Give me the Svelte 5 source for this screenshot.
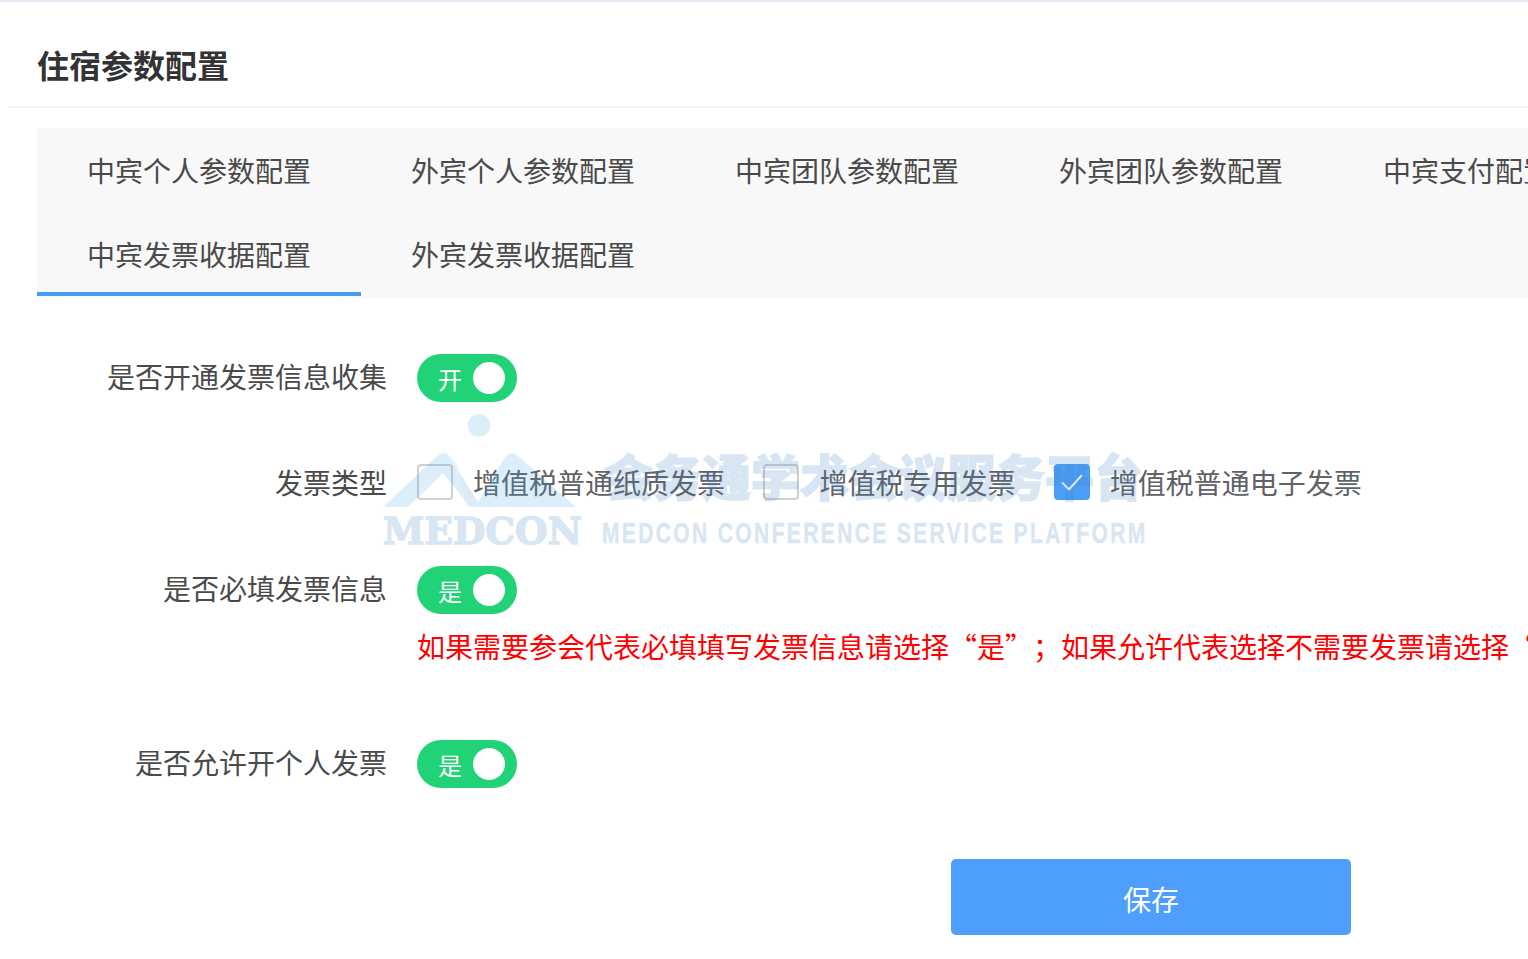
<script>
	const tabs = [
		'中宾个人参数配置',
		'外宾个人参数配置',
		'中宾团队参数配置',
		'外宾团队参数配置',
		'中宾支付配置',
		'中宾发票收据配置',
		'外宾发票收据配置'
	];
	const activeTab = 5;

	const invoiceTypes = [
		{ label: '增值税普通纸质发票', checked: false },
		{ label: '增值税专用发票', checked: false },
		{ label: '增值税普通电子发票', checked: true }
	];
</script>

<div class="page">
	<h1 class="title">住宿参数配置</h1>

	<div class="tabs">
		{#each tabs as tab, i}
			<div class="tab" class:active={i === activeTab}>{tab}</div>
		{/each}
	</div>

	<form class="form">
		<div class="row first">
			<div class="label">是否开通发票信息收集</div>
			<div class="switch"><span>开</span><i></i></div>
		</div>

		<div class="row types">
			<div class="label">发票类型</div>
			<div class="checks">
				{#each invoiceTypes as item}
					<div class="check">
						<span class="box" class:checked={item.checked}>
							{#if item.checked}
								<svg viewBox="0 0 36 36" width="36" height="36">
									<path d="M8 18.5 L15 25.5 L28 11" fill="none" stroke="#fff" stroke-width="2" />
								</svg>
							{/if}
						</span>
						<span class="check-label">{item.label}</span>
					</div>
				{/each}
			</div>
		</div>

		<div class="row required">
			<div class="label">是否必填发票信息</div>
			<div>
				<div class="switch"><span>是</span><i></i></div>
				<div class="tip">如果需要参会代表必填填写发票信息请选择“是”；如果允许代表选择不需要发票请选择“否”。</div>
			</div>
		</div>

		<div class="row personal">
			<div class="label">是否允许开个人发票</div>
			<div class="switch"><span>是</span><i></i></div>
		</div>

		<div class="actions">
			<button type="button" class="save">保存</button>
		</div>
	</form>

	<div class="watermark">
		<svg class="mark" viewBox="0 0 198 96" width="198" height="96">
			<circle cx="97" cy="13.3" r="11.3" fill="#3ca5e6" />
			<path fill-rule="evenodd" d="M1 95 L55 44 Q61 38 67 44 L96 90 L124 44 Q130 38 136 44 L194 95 Z M61 61 L26 95 L88 95 Z" fill="#3ca5e6" />
			<path d="M61 40 Q64 39 67 44 L96 90 L84 95 L75 50 Z" fill="#3c7ec0" opacity="0.35" />
		</svg>
		<div class="mark-name">MEDCON</div>
		<div class="mark-cn">会务通学术会议服务平台</div>
		<div class="mark-en">MEDCON CONFERENCE SERVICE PLATFORM</div>
	</div>
</div>

<style>
	:global(body) {
		margin: 0;
		overflow: hidden;
		background: #fff;
	}

	.page {
		position: relative;
		width: 1528px;
		height: 959px;
		overflow: hidden;
		box-sizing: border-box;
		border-top: 2px solid #e6e9f5;
		font-family: 'Noto Sans CJK SC', 'Liberation Sans', sans-serif;
		font-size: 28px;
		color: #4a4a4a;
		text-spacing-trim: space-all;
		font-feature-settings: 'chws' 0;
	}

	.title {
		box-sizing: border-box;
		width: 1700px;
		height: 106px;
		margin: 0 0 20px 8px;
		padding-left: 29px;
		line-height: 124px;
		font-size: 32px;
		font-weight: 700;
		color: #333;
		border-bottom: 2px solid #f5f5f5;
	}

	.tabs {
		display: flex;
		flex-wrap: wrap;
		width: 1700px;
		margin-left: 37px;
		padding-bottom: 2px;
		background: #f8f8f8;
	}

	.tab {
		box-sizing: border-box;
		width: 324px;
		height: 84px;
		line-height: 84px;
		padding-left: 50px;
		white-space: nowrap;
		color: #4a4a4a;
	}

	.tab.active {
		border-bottom: 4px solid #4a9cf0;
	}

	.form {
		padding-top: 56px;
	}

	.row {
		display: flex;
		align-items: flex-start;
	}

	.types {
		margin-top: 56px;
	}

	.types .label {
		line-height: 48px;
	}

	.required {
		margin-top: 60px;
	}

	.personal {
		margin-top: 74px;
	}

	.label {
		box-sizing: border-box;
		flex: none;
		width: 417px;
		height: 48px;
		padding-right: 30px;
		line-height: 44px;
		text-align: right;
		white-space: nowrap;
		color: #4a4a4a;
	}

	.switch {
		position: relative;
		box-sizing: border-box;
		width: 100px;
		height: 48px;
		padding-left: 21px;
		border-radius: 24px;
		background: #21d376;
		color: #fff;
		font-size: 24px;
		line-height: 50px;
	}

	.switch i {
		position: absolute;
		top: 8px;
		right: 12px;
		width: 32px;
		height: 32px;
		border-radius: 50%;
		background: #fff;
	}

	.checks {
		display: flex;
		align-items: center;
		height: 48px;
	}

	.check {
		display: flex;
		align-items: center;
		margin-right: 38.4px;
		white-space: nowrap;
	}

	.box {
		box-sizing: border-box;
		display: block;
		width: 36px;
		height: 36px;
		margin-right: 20px;
		border: 2px solid #d0d0d0;
		border-radius: 4px;
		background: #fff;
	}

	.box.checked {
		border: none;
		background: #4a9ff5;
	}

	.box svg {
		display: block;
	}

	.check-label {
		color: #606266;
		line-height: 48px;
	}

	.tip {
		width: 1300px;
		margin-top: 12px;
		line-height: 40px;
		white-space: nowrap;
		color: #ff0000;
	}

	.actions {
		display: flex;
		padding: 71px 0 0 951px;
	}

	.save {
		width: 400px;
		height: 76px;
		padding: 4px 0 0;
		border: none;
		border-radius: 5px;
		background: #4e9ffb;
		color: #fff;
		font-family: inherit;
		font-size: 28px;
	}

	/* the watermark lies over the form */
	.watermark {
		position: absolute;
		left: 382px;
		top: 410px;
		width: 780px;
		height: 140px;
		pointer-events: none;
	}

	.mark {
		position: absolute;
		left: 0;
		top: 0;
		opacity: 0.18;
	}

	.mark-name {
		position: absolute;
		left: 1px;
		top: 97px;
		font-family: 'DejaVu Serif', serif;
		font-size: 37.4px;
		font-weight: 700;
		line-height: 44px;
		color: #4282c8;
		-webkit-text-stroke: 1.4px #4282c8;
		opacity: 0.2;
		white-space: nowrap;
	}

	.mark-cn {
		position: absolute;
		left: 222px;
		top: 33px;
		font-size: 49px;
		font-weight: 900;
		line-height: 60px;
		white-space: nowrap;
		color: #4282c8;
		-webkit-text-stroke: 1.5px #4282c8;
		opacity: 0.2;
	}

	.mark-en {
		position: absolute;
		left: 220px;
		top: 103px;
		font-family: 'Liberation Sans', sans-serif;
		font-size: 30px;
		font-weight: 700;
		line-height: 36px;
		letter-spacing: 3.4px;
		white-space: nowrap;
		color: #4282c8;
		-webkit-text-stroke: 0.5px #4282c8;
		opacity: 0.2;
		transform-origin: left top;
		transform: scaleX(0.7);
	}
</style>
